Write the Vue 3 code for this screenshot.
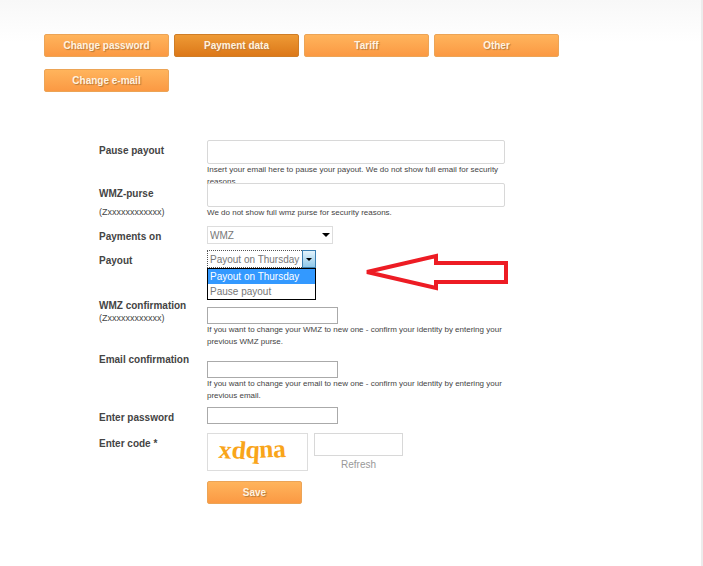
<template>
  <main class="page">
    <nav class="tabs">
      <button
        v-for="tab in tabs"
        :key="tab"
        type="button"
        class="btn"
        :class="{ active: tab === activeTab }"
        @click="activeTab = tab"
      >{{ tab }}</button>
    </nav>

    <form class="settings" @submit.prevent>
      <div class="row row-pause">
        <label for="pause">Pause payout</label>
        <div class="field">
          <input id="pause" v-model="form.pause" type="text" class="wide">
          <p class="hint">Insert your email here to pause your payout. We do not show full email for security reasons.</p>
        </div>
      </div>

      <div class="row row-purse">
        <label for="purse">WMZ-purse <span class="format spaced">(Zxxxxxxxxxxxx)</span></label>
        <div class="field">
          <input id="purse" v-model="form.purse" type="text" class="wide">
          <p class="hint">We do not show full wmz purse for security reasons.</p>
        </div>
      </div>

      <div class="row row-select">
        <label for="currency">Payments on</label>
        <div class="field">
          <div class="select currency">
            <select id="currency" v-model="form.currency">
              <option>WMZ</option>
            </select>
            <span class="arrow"></span>
          </div>
        </div>
      </div>

      <div class="row row-payout">
        <label for="payout">Payout</label>
        <div class="field">
          <div class="select payout">
            <select id="payout" v-model="form.payout">
              <option v-for="option in payoutOptions" :key="option">{{ option }}</option>
            </select>
            <span class="arrow"></span>
            <ul v-if="menuOpen" class="menu">
              <li
                v-for="option in payoutOptions"
                :key="option"
                :class="{ selected: option === form.payout }"
                @click="choose(option)"
              >{{ option }}</li>
            </ul>
            <!-- pointer to the payout menu -->
            <svg class="pointer" width="146" height="40" viewBox="0 0 146 40">
              <path d="M4 20 L73 4 V11 H143 V30 H73 V36 Z" fill="#fff" stroke="#ed1c24" stroke-width="4" />
            </svg>
          </div>
        </div>
      </div>

      <div class="row row-confirm">
        <label for="wmz-confirm">WMZ confirmation <span class="format">(Zxxxxxxxxxxxx)</span></label>
        <div class="field lowered">
          <input id="wmz-confirm" v-model="form.wmzConfirm" type="text" class="plain">
          <p class="hint">If you want to change your WMZ to new one - confirm your identity by entering your previous WMZ purse.</p>
        </div>
      </div>

      <div class="row row-confirm">
        <label for="email-confirm">Email confirmation</label>
        <div class="field lowered">
          <input id="email-confirm" v-model="form.emailConfirm" type="text" class="plain">
          <p class="hint">If you want to change your email to new one - confirm your identity by entering your previous email.</p>
        </div>
      </div>

      <div class="row row-password">
        <label for="password">Enter password</label>
        <div class="field">
          <input id="password" v-model="form.password" type="password" class="plain">
        </div>
      </div>

      <div class="row row-code">
        <label for="code">Enter code *</label>
        <div class="field code">
          <svg class="captcha" width="101" height="38" viewBox="0 0 101 38">
            <text x="9" y="25" rotate="5 6 3 -3 -4">xdqna</text>
          </svg>
          <div class="code-entry">
            <input id="code" v-model="form.code" type="text">
            <a href="#" @click.prevent="form.code = ''">Refresh</a>
          </div>
        </div>
      </div>

      <div class="row">
        <button type="submit" class="btn save">Save</button>
      </div>
    </form>
  </main>
</template>

<script setup>
import { reactive, ref } from 'vue'

const tabs = ['Change password', 'Payment data', 'Tariff', 'Other', 'Change e-mail']
const activeTab = ref('Payment data')

const payoutOptions = ['Payout on Thursday', 'Pause payout']
const menuOpen = ref(true)

const form = reactive({
  pause: '',
  purse: '',
  currency: 'WMZ',
  payout: 'Payout on Thursday',
  wmzConfirm: '',
  emailConfirm: '',
  password: '',
  code: ''
})

// Pick an option and close the list
const choose = (option) => {
  form.payout = option
  menuOpen.value = false
}
</script>

<style>
body {
  margin: 0;
  background: #fff;
}
</style>

<style scoped>
.page {
  box-sizing: border-box;
  min-height: 100vh;
  padding: 34px 20px 34px 44px;
  border-right: 2px solid #ececec;
  background: linear-gradient(#f8f8f8, #fff 42px);
  color: #444;
  font-family: "Liberation Sans", Arial, sans-serif;
  font-size: 10px;
}

input,
select,
button {
  box-sizing: border-box;
  margin: 0;
  font-family: inherit;
  font-size: 10px;
}

.tabs {
  display: flex;
  flex-wrap: wrap;
  gap: 12px 5px;
  max-width: 520px;
}

.btn {
  width: 125px;
  height: 23px;
  padding: 0;
  border: 1px solid #eca456;
  border-radius: 2px;
  background: linear-gradient(#ffb45c, #fb9943);
  color: #fff3e0;
  font-weight: bold;
  text-shadow: 1px 1px 1px #b87838;
  cursor: pointer;
}

.btn.active {
  border-color: #cf7d26;
  background: linear-gradient(#ee9a35, #dc7819);
}

.settings {
  max-width: 406px;
  margin: 48px 0 0 55px;
}

.row {
  display: grid;
  grid-template-columns: 108px 1fr;
  align-items: start;
}

.row label {
  padding-top: 5px;
  font-weight: bold;
  line-height: 12px;
}

.format {
  display: block;
  font-size: 9px;
  font-weight: normal;
}

.spaced {
  margin-top: 6px;
}

/* the two-line hint runs under the next field */
.row-pause {
  height: 43px;
}

.row-purse {
  position: relative;
  min-height: 43px;
}

.row-select {
  min-height: 24px;
}

.row-payout {
  min-height: 49px;
}

.row-confirm {
  min-height: 54px;
}

.row-confirm label {
  padding-top: 1px;
}

.row-password {
  min-height: 26px;
}

.row-code {
  min-height: 48px;
}

.field input {
  display: block;
  border: 1px solid #d8d8d8;
  background: #fff;
  color: #666;
}

.field .wide {
  width: 100%;
  height: 24px;
  border-radius: 2px;
}

.field .plain {
  width: 131px;
  height: 17px;
  border-color: #aaa;
}

.lowered {
  padding-top: 8px;
}

.hint {
  margin: 0;
  font-size: 8px;
  line-height: 12px;
}

.select {
  position: relative;
  height: 18px;
}

.select select {
  display: block;
  width: 100%;
  height: 18px;
  padding: 0 2px;
  border: 1px solid #ddd;
  border-radius: 0;
  background: #fff;
  color: #777;
  appearance: none;
}

.currency {
  width: 126px;
}

.payout {
  width: 109px;
}

.payout select {
  border: 1px dotted #555;
}

.arrow {
  position: absolute;
  top: 7px;
  right: 3px;
  border: 4px solid transparent;
  border-top-color: #000;
  border-bottom: 0;
  pointer-events: none;
}

.payout .arrow {
  box-sizing: border-box;
  top: 0;
  right: 0;
  width: 14px;
  height: 18px;
  border: 1px solid #3c7fb1;
  background: linear-gradient(#e4f4fc, #8fc8ea);
}

.payout .arrow::after {
  content: "";
  position: absolute;
  top: 7px;
  left: 3px;
  border: 3px solid transparent;
  border-top-color: #000;
  border-bottom: 0;
}

.menu {
  position: absolute;
  top: 18px;
  left: 0;
  right: 0;
  z-index: 1;
  margin: 0;
  padding: 0;
  border: 1px solid #000;
  background: #fff;
  color: #777;
  line-height: 15px;
  list-style: none;
}

.menu li {
  padding-left: 2px;
}

.menu .selected {
  background: #3399ff;
  color: #fff;
}

.pointer {
  position: absolute;
  top: 2px;
  left: 156px;
}

.code {
  display: flex;
  gap: 6px;
}

.captcha {
  box-sizing: border-box;
  border: 1px solid #ddd;
  fill: #f9a51a;
  font-family: "Liberation Serif", serif;
  font-size: 27px;
  font-weight: bold;
}

.code-entry {
  width: 89px;
  text-align: center;
}

.code-entry input {
  width: 100%;
  height: 23px;
}

.code-entry a {
  color: #999;
  line-height: 18px;
  text-decoration: none;
}

.save {
  grid-column: 2;
  width: 95px;
}
</style>
